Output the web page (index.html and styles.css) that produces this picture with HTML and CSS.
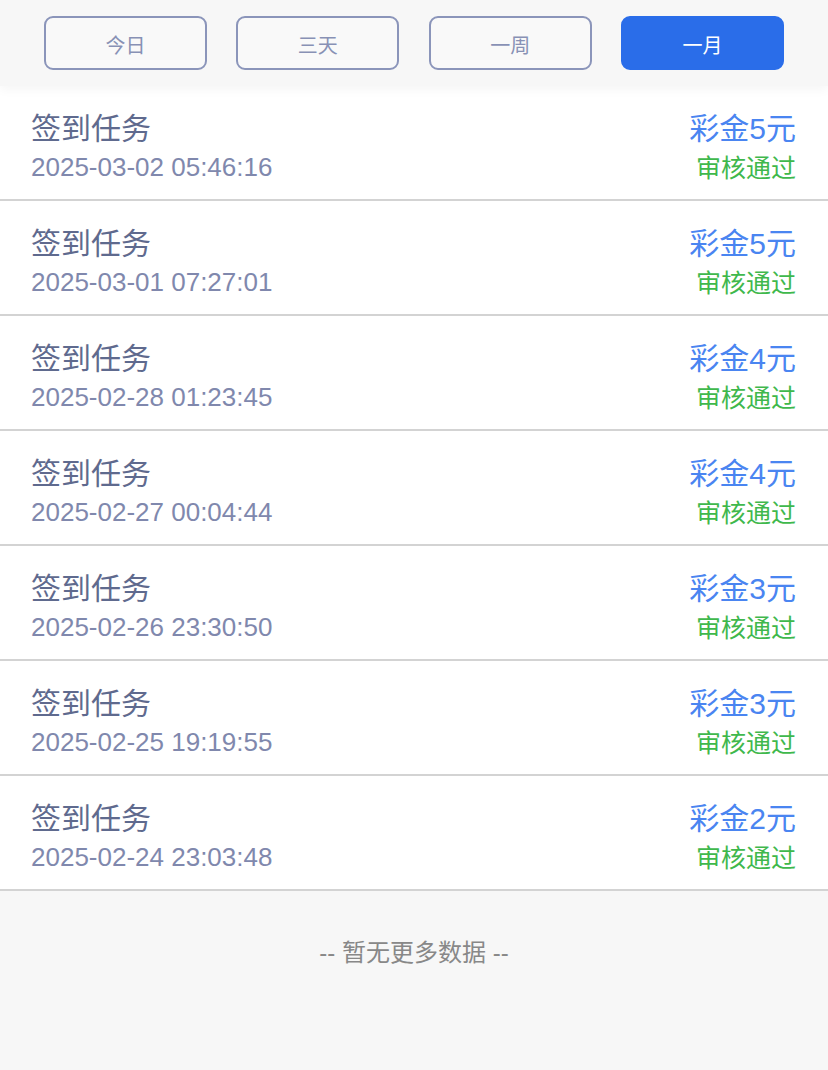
FILE: index.html
```html
<!DOCTYPE html>
<html lang="zh-CN">
<head>
<meta charset="utf-8">
<title>签到记录</title>
<link rel="stylesheet" href="styles.css">
</head>
<body>
<div class="page">
  <div class="tabs">
    <div class="tab">今日</div>
    <div class="tab">三天</div>
    <div class="tab">一周</div>
    <div class="tab active">一月</div>
  </div>
  <div class="list">
    <div class="row">
      <div class="left"><div class="title">签到任务</div><div class="date">2025-03-02 05:46:16</div></div>
      <div class="right"><div class="amount">彩金5元</div><div class="status">审核通过</div></div>
    </div>
    <div class="row">
      <div class="left"><div class="title">签到任务</div><div class="date">2025-03-01 07:27:01</div></div>
      <div class="right"><div class="amount">彩金5元</div><div class="status">审核通过</div></div>
    </div>
    <div class="row">
      <div class="left"><div class="title">签到任务</div><div class="date">2025-02-28 01:23:45</div></div>
      <div class="right"><div class="amount">彩金4元</div><div class="status">审核通过</div></div>
    </div>
    <div class="row">
      <div class="left"><div class="title">签到任务</div><div class="date">2025-02-27 00:04:44</div></div>
      <div class="right"><div class="amount">彩金4元</div><div class="status">审核通过</div></div>
    </div>
    <div class="row">
      <div class="left"><div class="title">签到任务</div><div class="date">2025-02-26 23:30:50</div></div>
      <div class="right"><div class="amount">彩金3元</div><div class="status">审核通过</div></div>
    </div>
    <div class="row">
      <div class="left"><div class="title">签到任务</div><div class="date">2025-02-25 19:19:55</div></div>
      <div class="right"><div class="amount">彩金3元</div><div class="status">审核通过</div></div>
    </div>
    <div class="row">
      <div class="left"><div class="title">签到任务</div><div class="date">2025-02-24 23:03:48</div></div>
      <div class="right"><div class="amount">彩金2元</div><div class="status">审核通过</div></div>
    </div>
  </div>
  <div class="footer">-- 暂无更多数据 --</div>
</div>
</body>
</html>
```

FILE: styles.css
```css
* { box-sizing: border-box; }
html, body {
  margin: 0;
  padding: 0;
  background: #f7f7f7;
  font-family: "Liberation Sans", "Noto Sans CJK SC", sans-serif;
}
.page {
  width: 828px;
  min-height: 1070px;
  background: #f7f7f7;
}
.tabs {
  height: 86px;
  padding: 16px 44px;
  display: flex;
  justify-content: space-between;
  background: #f7f7f7;
  position: relative;
  z-index: 1;
  box-shadow: 0 4px 10px rgba(0, 0, 0, 0.04);
}
.tab {
  width: 163px;
  height: 54px;
  padding-top: 2px;
  border: 2px solid #8b95ba;
  border-radius: 9px;
  display: flex;
  align-items: center;
  justify-content: center;
  font-size: 20px;
  color: #8891b5;
  background: #f9f9f9;
}
.tab.active {
  background: #2a6de9;
  border-color: #2a6de9;
  color: #ffffff;
}
.list {
  background: #ffffff;
}
.row {
  height: 115px;
  padding: 24px 32px 0 31px;
  border-bottom: 2px solid #d3d3d3;
  display: flex;
  justify-content: space-between;
  align-items: flex-start;
}
.title {
  font-size: 30px;
  line-height: 38px;
  color: #5f6a8e;
}
.date {
  font-size: 26px;
  line-height: 38px;
  color: #8088ad;
}
.right {
  text-align: right;
}
.amount {
  font-size: 30px;
  line-height: 38px;
  color: #4a85f1;
}
.status {
  font-size: 25px;
  line-height: 40px;
  color: #3fb84c;
}
.footer {
  padding-top: 46px;
  text-align: center;
  font-size: 24px;
  line-height: 32px;
  color: #888888;
}
```
